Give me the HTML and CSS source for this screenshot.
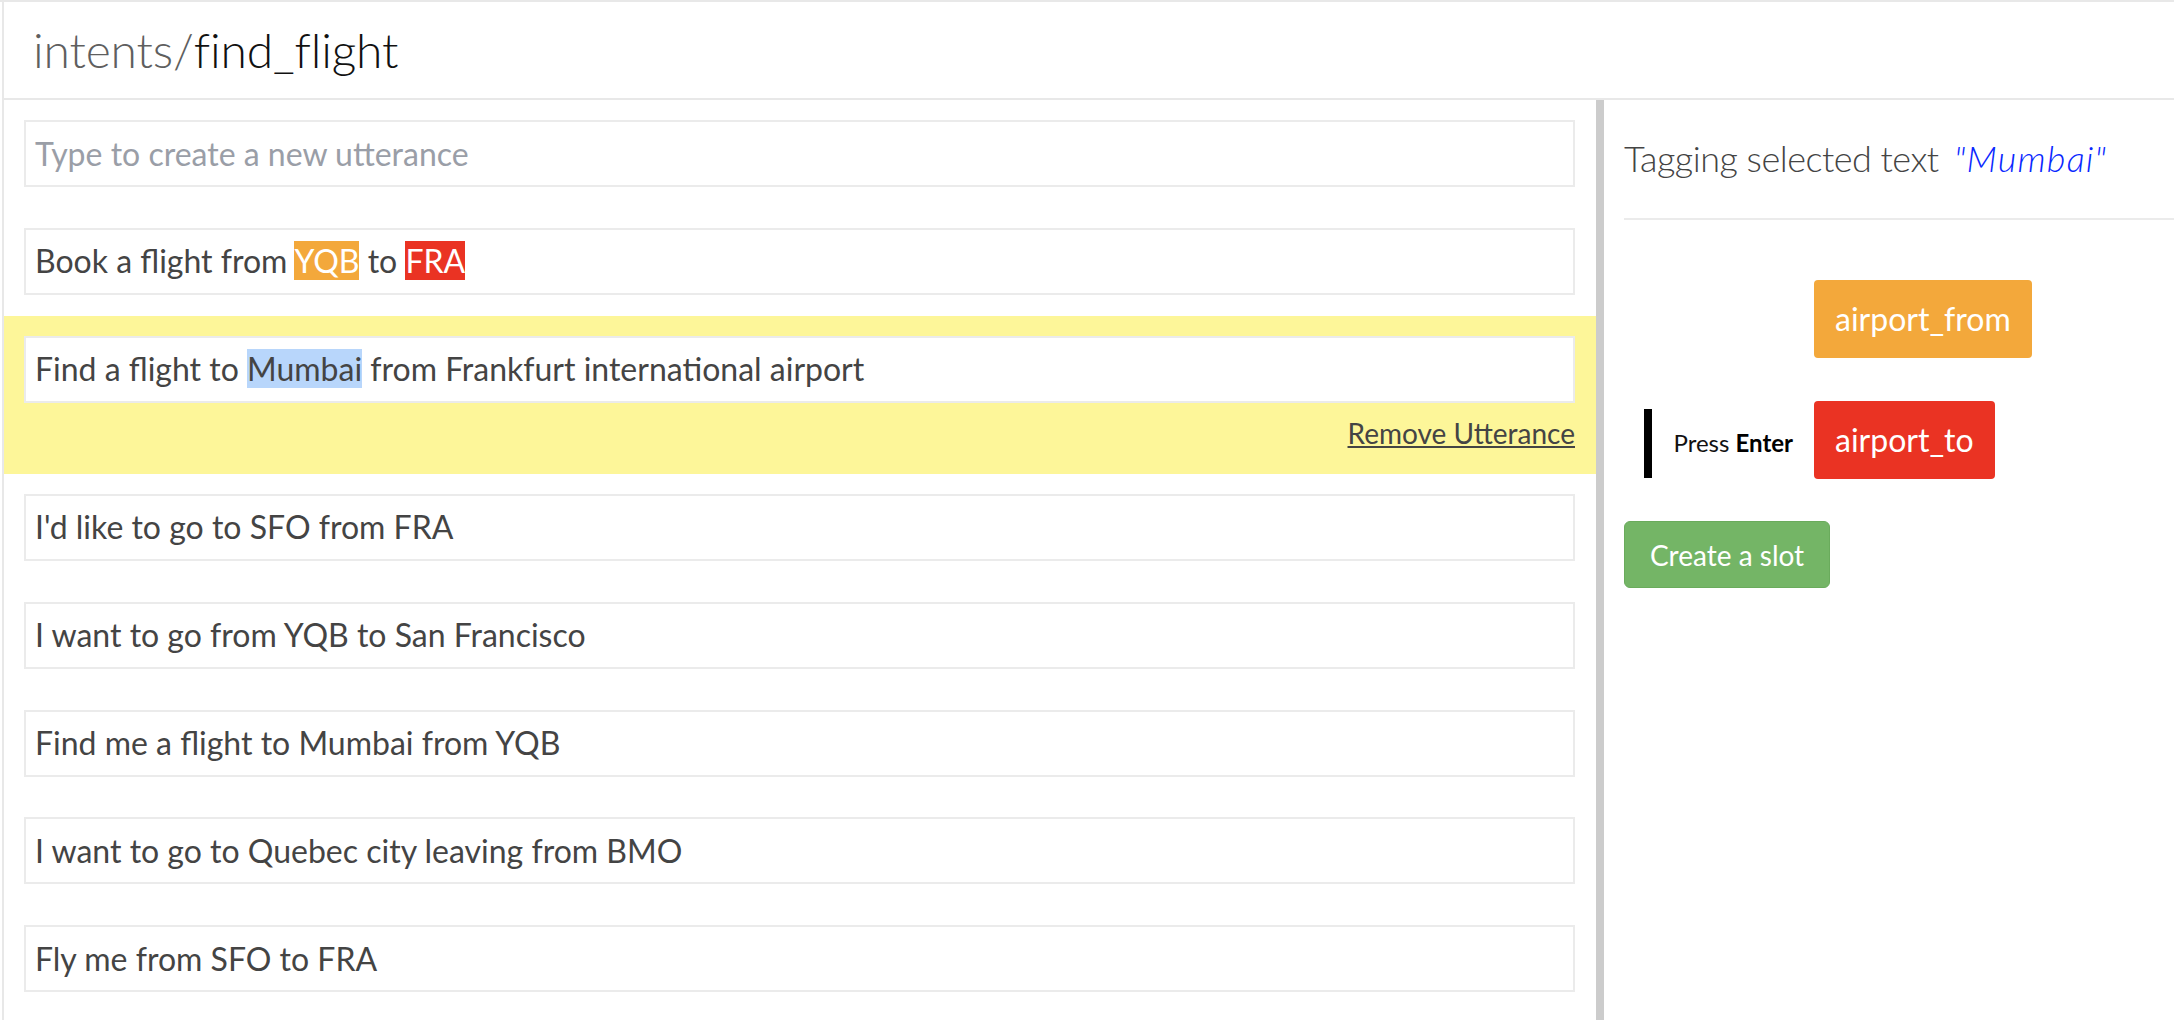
FILE: index.html
```html
<!DOCTYPE html>
<html lang="en">
<head>
<meta charset="utf-8">
<title>intents/find_flight</title>
<link rel="stylesheet" href="styles.css">
</head>
<body>
<div class="app">
  <header class="topbar"><span class="crumb">intents/</span><span class="intent-name">find_flight</span></header>
  <div class="main">
    <section class="utterances">
      <div class="item"><div class="box placeholder">Type to create a new utterance</div></div>
      <div class="item"><div class="box">Book a flight from <span class="tag tag-from">YQB</span> to <span class="tag tag-to">FRA</span></div></div>
      <div class="item active">
        <div class="box">Find a flight to <span class="selection">Mumbai</span> from Frankfurt international airport</div>
        <div class="actions"><a class="remove" href="#">Remove Utterance</a></div>
      </div>
      <div class="item"><div class="box">I'd like to go to SFO from FRA</div></div>
      <div class="item"><div class="box">I want to go from YQB to San Francisco</div></div>
      <div class="item"><div class="box">Find me a flight to Mumbai from YQB</div></div>
      <div class="item"><div class="box">I want to go to Quebec city leaving from BMO</div></div>
      <div class="item"><div class="box">Fly me from SFO to FRA</div></div>
    </section>
    <aside class="tagger">
      <h2 class="tagger-title">Tagging selected text <em class="selected-text">"Mumbai"</em></h2>
      <div class="slots">
        <div class="slot-row"><button class="slot slot-from">airport_from</button></div>
        <div class="slot-row"><div class="hint">Press <b>Enter</b></div><button class="slot slot-to">airport_to</button></div>
      </div>
      <button class="create">Create a slot</button>
    </aside>
  </div>
</div>
</body>
</html>
```

FILE: styles.css
```css
* { box-sizing: border-box; }
html, body { margin: 0; padding: 0; }
body {
  font-family: Lato, "Open Sans", "Liberation Sans", sans-serif;
  color: #444;
  background: #fff;
  border-top: 2px solid #e8e8e8;
  height: 100vh;
  overflow: hidden;
}
.app {
  margin-left: 2px;
  border-left: 2px solid #e8e8e8;
  height: calc(100vh - 2px);
  display: flex;
  flex-direction: column;
}
.topbar {
  height: 98px;
  border-bottom: 2px solid #e8e8e8;
  display: flex;
  align-items: center;
  padding: 0 29px;
  font-size: 48px;
  font-weight: 300;
  line-height: 1.2;
  letter-spacing: -0.15px;
}
.crumb { color: #5f5f5f; }
.intent-name { color: #111; }
.main {
  flex: 1;
  display: flex;
  min-height: 0;
}
.utterances {
  width: 1592px;
  flex: none;
  overflow: hidden;
}
.item {
  padding: 20.4px 21px 20.4px 20px;
}
.item.active { background: #fdf699; }
.box {
  border: 2px solid #ebebeb;
  background: #fff;
  padding: 12.3px 9px;
  font-size: 32px;
  line-height: 1.2;
  color: #444;
  white-space: nowrap;
}
.box.placeholder { color: #9a9ea7; }
.tag { color: #fff; }
.tag-from { background: #f3a83b; }
.tag-to { background: #ea3323; }
.selection { background: #b8d6fb; }
.actions {
  display: flex;
  justify-content: flex-end;
  margin-top: 10.5px;
  font-size: 28px;
  line-height: 40px;
}
.remove { color: #444; text-decoration: underline; }
.tagger {
  flex: 1;
  border-left: 8px solid #cccccc;
  padding-left: 20px;
}
.tagger-title {
  margin: 0;
  padding: 36.8px 0 38px;
  font-size: 36px;
  font-weight: 300;
  line-height: 1.2;
  color: #444;
  letter-spacing: -0.5px;
  border-bottom: 2px solid #ebebeb;
}
.selected-text {
  color: #0a28ff;
  font-style: italic;
  margin-left: 6px;
  letter-spacing: 1.2px;
}
.slots {
  padding-top: 60px;
  display: flex;
  flex-direction: column;
  gap: 42.3px;
}
.slot-row {
  display: grid;
  grid-template-columns: 190px auto;
  align-items: baseline;
  justify-content: start;
}
.slot {
  grid-column: 2;
  grid-row: 1;
  border: none;
  border-radius: 4px;
  color: #fff;
  font-family: inherit;
  font-size: 32px;
  line-height: 1.2;
  padding: 20px 21px;
  cursor: pointer;
}
.slot-from { background: #f3a83b; }
.slot-to { background: #ea3323; }
.hint {
  grid-column: 1;
  grid-row: 1;
  justify-self: end;
  margin-right: 21px;
  border-left: 8px solid #000;
  padding: 20px 0 21px 21px;
  font-size: 24px;
  line-height: 1.2;
  color: #111;
}
.hint b { font-weight: 700; color: #000; }
.create {
  display: block;
  margin-top: 42px;
  background: #74b566;
  border: 1px solid #6aab5c;
  border-radius: 6px;
  color: #fff;
  font-family: inherit;
  font-size: 28px;
  line-height: 40px;
  padding: 12.5px 25px;
  cursor: pointer;
}
```
